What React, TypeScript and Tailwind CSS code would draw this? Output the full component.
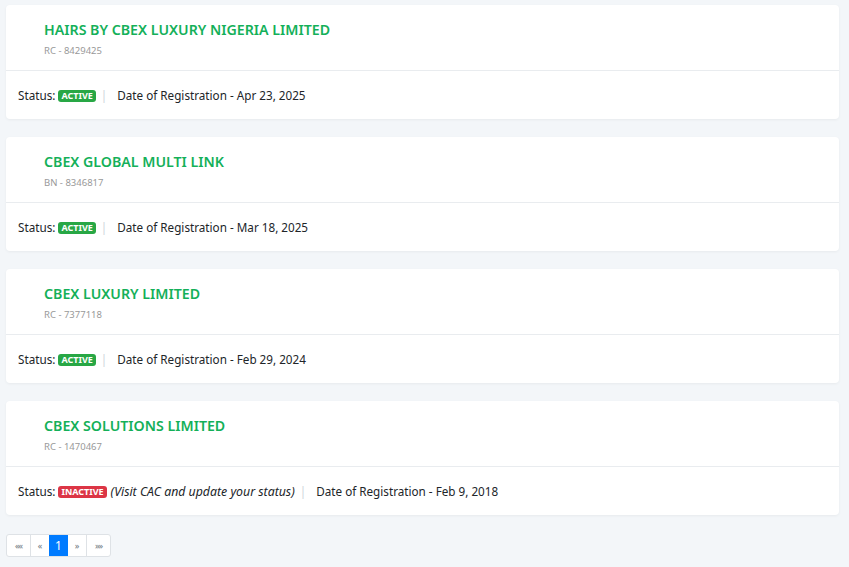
const businesses = [
  { name: 'HAIRS BY CBEX LUXURY NIGERIA LIMITED', reg: 'RC - 8429425', active: true, date: 'Apr 23, 2025' },
  { name: 'CBEX GLOBAL MULTI LINK', reg: 'BN - 8346817', active: true, date: 'Mar 18, 2025' },
  { name: 'CBEX LUXURY LIMITED', reg: 'RC - 7377118', active: true, date: 'Feb 29, 2024' },
  { name: 'CBEX SOLUTIONS LIMITED', reg: 'RC - 1470467', active: false, date: 'Feb 9, 2018' },
];

function BusinessCard({ b }: { b: (typeof businesses)[number] }) {
  return (
    <div className="rounded-[4px] bg-white shadow-[0_1px_3px_rgba(0,0,0,0.05)]">
      <div className="h-[66px] border-b border-[#e9ecef] pl-[38px] pt-[15px]">
        <div className="text-[14.2px] font-semibold leading-[20px] text-[#14b059]">{b.name}</div>
        <div className="mt-[5px] text-[9.5px] leading-[12px] text-[#999999]">{b.reg}</div>
      </div>
      <div className="flex h-[48px] items-center px-[12px] pt-[2px] text-[11.7px] text-[#212529]">
        <span>Status:</span>
        {b.active ? (
          <span className="ml-[3px] rounded-[3px] bg-[#28a745] px-[3px] text-[9px] font-bold leading-[12px] text-white">ACTIVE</span>
        ) : (
          <>
            <span className="ml-[3px] rounded-[3px] bg-[#dc3545] px-[3px] text-[9px] font-bold leading-[12px] text-white">INACTIVE</span>
            <span className="ml-[4px] text-[12.3px] italic">(Visit CAC and update your status)</span>
          </>
        )}
        <span className="ml-[5px] mr-[10px] text-[#ced4da]">|</span>
        <span>Date of Registration - {b.date}</span>
      </div>
    </div>
  );
}

export default function App() {
  return (
    <div
      className="min-h-[567px] bg-[#f3f6f9] pb-[9px] pl-[6px] pr-[10px] pt-[5px]"
      style={{ fontFamily: '"Noto Sans", "Open Sans", sans-serif' }}
    >
      <div className="flex flex-col gap-[18px]">
        {businesses.map((b) => (
          <BusinessCard key={b.reg} b={b} />
        ))}
      </div>
      <div className="mt-[19px] flex">
        <div className="flex overflow-hidden rounded-[3px] border border-[#dee2e6] bg-white text-[9px] text-[#6c757d]">
          <span className="flex h-[21px] w-[24px] items-center justify-center border-r border-[#dee2e6] tracking-[-1px]">««</span>
          <span className="flex h-[21px] w-[18px] items-center justify-center">«</span>
          <span className="flex h-[21px] w-[19px] items-center justify-center bg-[#007bff] text-[12px] text-white">1</span>
          <span className="flex h-[21px] w-[19px] items-center justify-center border-r border-[#dee2e6]">»</span>
          <span className="flex h-[21px] w-[23px] items-center justify-center tracking-[-1px]">»»</span>
        </div>
      </div>
    </div>
  );
}
